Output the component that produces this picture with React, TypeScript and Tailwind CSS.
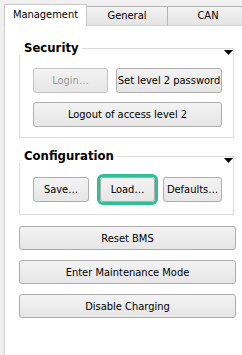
import React from "react";

const font = { fontFamily: '"DejaVu Sans Condensed", "Liberation Sans", sans-serif' };

function Btn({
  children,
  className = "",
  disabled = false,
}: {
  children: React.ReactNode;
  className?: string;
  disabled?: boolean;
}) {
  return (
    <div
      className={
        "flex items-center justify-center rounded-[3px] border border-[#adadad] bg-gradient-to-b from-[#f3f3f3] to-[#e6e6e6] text-[11px] leading-none whitespace-nowrap " +
        (disabled ? "text-[#9a9a9a] border-[#c4c4c4] " : "text-black ") +
        className
      }
    >
      {children}
    </div>
  );
}

function Triangle() {
  return (
    <svg
      className="absolute left-[204px] top-[1px]"
      width="9"
      height="5"
      viewBox="0 0 9 5"
    >
      <polygon points="0,0 9,0 4.5,5" fill="#000" />
    </svg>
  );
}

function Group({
  title,
  children,
  className = "",
}: {
  title: string;
  children: React.ReactNode;
  className?: string;
}) {
  return (
    <div className={"relative ml-[14px] w-[215px] border border-[#dcdcdc] " + className}>
      <div className="absolute -left-px -top-[8px] h-[14px] bg-white pl-[5px] pr-[3px] text-[13px] font-bold leading-[14px] text-black">
        {title}
      </div>
      <Triangle />
      {children}
    </div>
  );
}

export default function App() {
  return (
    <div
      className="flex h-[355px] w-[242px] flex-col overflow-hidden bg-[#f0f0f0] pl-[4px] pt-[4px]"
      style={font}
    >
      <div className="relative z-10 flex h-[22px] items-start">
        <div className="flex h-[22px] w-[83px] shrink-0 items-center justify-center border border-b-0 border-[#c8c8c8] bg-white pb-[1px] text-[11px] text-black">
          Management
        </div>
        <div className="mt-[2px] flex h-[19px] w-[81px] shrink-0 items-center justify-center border-r border-t border-[#b4b4b4] bg-gradient-to-b from-[#f2f2f2] to-[#e4e4e4] text-[11px] text-black">
          General
        </div>
        <div className="mt-[2px] flex h-[19px] w-[80px] shrink-0 items-center justify-center border-t border-[#b4b4b4] bg-gradient-to-b from-[#f2f2f2] to-[#e4e4e4] text-[11px] text-black">
          CAN
        </div>
      </div>
      <div className="-mt-px flex-1 border-l border-t border-[#d0d0d0] bg-white">
        <Group title="Security" className="mt-[22px] pb-[10px] pl-[13px] pr-[11px] pt-[19px]">
          <div className="flex">
            <Btn disabled className="h-[25px] w-[75px]">
              Login…
            </Btn>
            <Btn className="ml-[8px] h-[25px] w-[106px]">Set level 2 password</Btn>
          </div>
          <Btn className="mt-[9px] h-[25px] w-[189px]">Logout of access level 2</Btn>
        </Group>
        <Group title="Configuration" className="mt-[18px] pb-[12px] pl-[13px] pt-[20px]">
          <div className="flex">
            <Btn className="h-[25px] w-[56px]">Save…</Btn>
            <Btn className="ml-[11px] h-[25px] w-[55px] ring-[3px] ring-[#2ebf97]">Load…</Btn>
            <Btn className="ml-[8px] h-[25px] w-[59px]">Defaults…</Btn>
          </div>
        </Group>
        <div className="ml-[14px] mt-[11px] flex w-[217px] flex-col gap-[10px]">
          <Btn className="h-[24px]">Reset BMS</Btn>
          <Btn className="h-[24px]">Enter Maintenance Mode</Btn>
          <Btn className="h-[24px]">Disable Charging</Btn>
        </div>
      </div>
    </div>
  );
}
